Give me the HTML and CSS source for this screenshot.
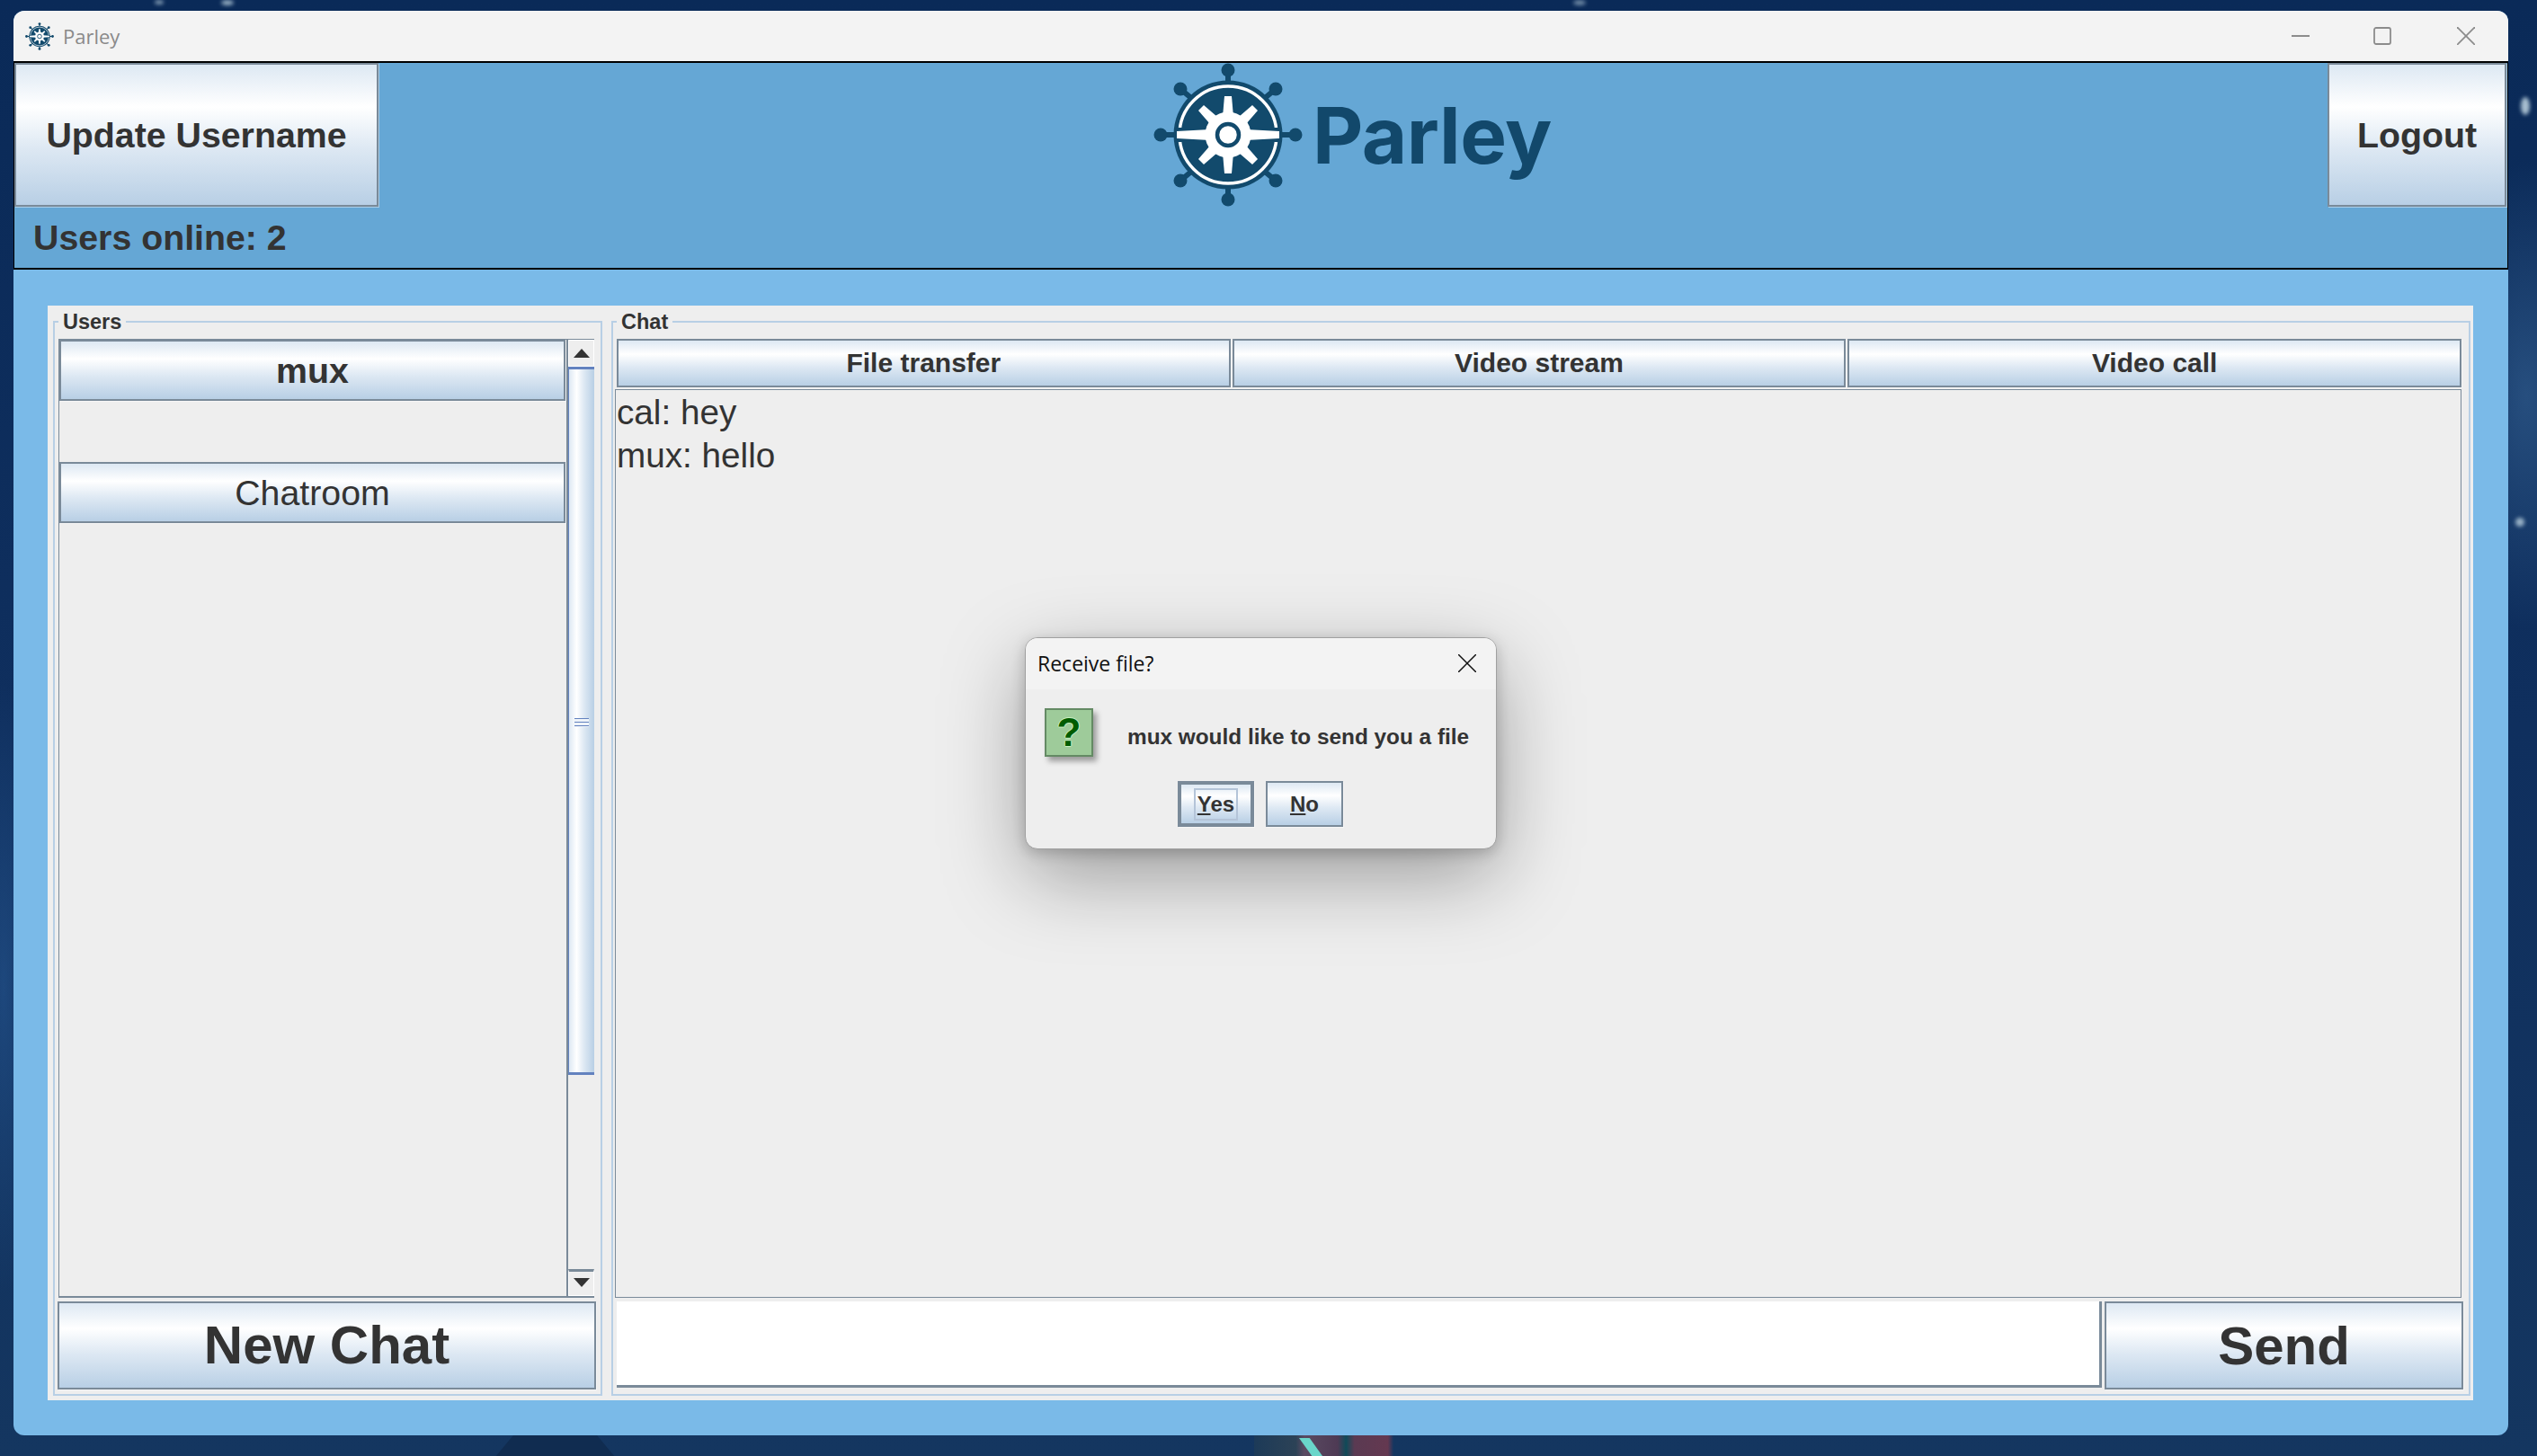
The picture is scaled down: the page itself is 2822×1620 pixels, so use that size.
FILE: index.html
```html
<!DOCTYPE html>
<html lang="en">
<head>
<meta charset="utf-8">
<title>Parley</title>
<link rel="stylesheet" href="styles.css">
</head>
<body>
<svg class="defs" width="0" height="0" aria-hidden="true">
  <defs>
    <symbol id="wheel" viewBox="-83 -80 166 160">
      <g stroke="#124a6c" stroke-width="6" stroke-linecap="round">
        <line x1="0" y1="-58" x2="0" y2="-72"/>
        <line x1="0" y1="58" x2="0" y2="72"/>
        <line x1="-58" y1="0" x2="-75" y2="0"/>
        <line x1="58" y1="0" x2="75" y2="0"/>
        <line x1="-41" y1="-41" x2="-53" y2="-51"/>
        <line x1="41" y1="-41" x2="53" y2="-51"/>
        <line x1="-41" y1="41" x2="-53" y2="51"/>
        <line x1="41" y1="41" x2="53" y2="51"/>
      </g>
      <g fill="#124a6c">
        <circle cx="0" cy="-72" r="7.5"/><circle cx="0" cy="72" r="7.5"/>
        <circle cx="-75" cy="0" r="7.5"/><circle cx="75" cy="0" r="7.5"/>
        <circle cx="-53" cy="-51" r="7.5"/><circle cx="53" cy="-51" r="7.5"/>
        <circle cx="-53" cy="51" r="7.5"/><circle cx="53" cy="51" r="7.5"/>
        <circle cx="0" cy="0" r="60.5"/>
      </g>
      <circle cx="0" cy="0" r="54" fill="none" stroke="#fff" stroke-width="3.5"/>
      <rect x="-60" y="-8" width="120" height="16" fill="#124a6c"/>
      <g fill="#fff">
        <polygon points="-57,-4 -20,-6 -20,6 -57,4"/>
        <polygon points="57,-4 20,-6 20,6 57,4"/>
        <polygon points="-4,-43 4,-43 6,-20 -6,-20"/>
        <polygon points="-4,43 4,43 6,20 -6,20"/>
        <polygon points="-33,-27 -27,-33 -12,-20 -20,-12"/>
        <polygon points="33,-27 27,-33 12,-20 20,-12"/>
        <polygon points="-33,27 -27,33 -12,20 -20,12"/>
        <polygon points="33,27 27,33 12,20 20,12"/>
        <circle cx="0" cy="0" r="25.5"/>
      </g>
      <circle cx="0" cy="0" r="12" fill="#fff" stroke="#124a6c" stroke-width="4.5"/>
    </symbol>
  </defs>
</svg>

<div class="desktop">
  <span class="star star-a"></span>
  <span class="star star-b"></span>
  <span class="star star-c"></span>
  <span class="star star-d"></span>
  <span class="star star-e"></span>
  <span class="peak"></span>
  <span class="mauve"></span>
  <span class="teal"></span>

  <main class="window">
    <div class="titlebar">
      <svg class="title-icon"><use href="#wheel"/></svg>
      <span class="title-text">Parley</span>
      <div class="controls">
        <svg class="ctl" viewBox="0 0 20 20"><line x1="0" y1="10" x2="20" y2="10"/></svg>
        <svg class="ctl" viewBox="0 0 20 20"><rect x="1" y="1" width="18" height="18" rx="2"/></svg>
        <svg class="ctl" viewBox="0 0 20 20"><line x1="0" y1="0" x2="20" y2="20"/><line x1="20" y1="0" x2="0" y2="20"/></svg>
      </div>
    </div>

    <header class="header">
      <div class="header-row">
        <button class="btn btn-update">Update Username</button>
        <div class="logo">
          <svg class="logo-wheel"><use href="#wheel"/></svg>
          <span class="logo-text">Parley</span>
        </div>
        <button class="btn btn-logout">Logout</button>
      </div>
      <div class="online">Users online: 2</div>
    </header>

    <div class="content">
      <div class="panel">
        <fieldset class="group group-users">
          <legend>Users</legend>
          <div class="list-wrap">
            <div class="list">
              <button class="btn list-item list-item-bold">mux</button>
              <button class="btn list-item">Chatroom</button>
            </div>
            <div class="scrollbar">
              <div class="arrow arrow-up"></div>
              <div class="thumb"><span class="grip"></span></div>
              <div class="track"></div>
              <div class="arrow arrow-down"></div>
            </div>
          </div>
          <button class="btn big new-chat">New Chat</button>
        </fieldset>

        <fieldset class="group group-chat">
          <legend>Chat</legend>
          <div class="tabs">
            <button class="btn tab">File transfer</button>
            <button class="btn tab">Video stream</button>
            <button class="btn tab">Video call</button>
          </div>
          <div class="messages">
            <div>cal: hey</div>
            <div>mux: hello</div>
          </div>
          <div class="composer">
            <div class="input"></div>
            <button class="btn big send">Send</button>
          </div>
        </fieldset>
      </div>
    </div>

    <div class="dialog">
      <div class="dialog-title">
        <span>Receive file?</span>
        <svg class="dialog-close" viewBox="0 0 20 20"><line x1="0" y1="0" x2="20" y2="20"/><line x1="20" y1="0" x2="0" y2="20"/></svg>
      </div>
      <div class="dialog-body">
        <div class="dialog-msg">
          <div class="q-icon">?</div>
          <div class="msg-text">mux would like to send you a file</div>
        </div>
        <div class="dialog-actions">
          <button class="btn dlg-btn dlg-default"><span class="focus"><u>Y</u>es</span></button>
          <button class="btn dlg-btn"><span><u>N</u>o</span></button>
        </div>
      </div>
    </div>
  </main>
</div>
</body>
</html>
```

FILE: styles.css
```css
* { box-sizing: border-box; }
html, body { margin: 0; padding: 0; }
body { font-family: "Liberation Sans", Arial, sans-serif; color: #333; overflow: hidden; }
.defs { position: absolute; }

.desktop {
  position: relative;
  width: 2822px;
  height: 1620px;
  padding: 12px 32px 23px 15px;
  overflow: hidden;
  background:
    radial-gradient(ellipse 90px 260px at 2810px 440px, rgba(70,120,170,.45), transparent),
    radial-gradient(ellipse 40px 340px at 4px 1100px, rgba(40,90,150,.55), transparent),
    linear-gradient(180deg, #0a2a58 0%, #0f2f5e 50%, #143660 100%);
}
.star { position: absolute; border-radius: 50%; background: #cfe4ee; filter: blur(2px); }
.star-a { left: 172px; top: 0; width: 10px; height: 5px; opacity: .6; }
.star-b { left: 246px; top: 0; width: 14px; height: 6px; opacity: .7; }
.star-c { left: 2804px; top: 108px; width: 10px; height: 20px; opacity: .8; }
.star-d { left: 2798px; top: 576px; width: 10px; height: 10px; opacity: .7; }
.star-e { left: 1750px; top: 0; width: 14px; height: 6px; opacity: .5; }
.peak { position: absolute; left: 551px; top: 1597px; width: 133px; height: 24px; background: #102c50; clip-path: polygon(15% 0, 85% 0, 100% 100%, 0 100%); }
.mauve { position: absolute; left: 1395px; top: 1597px; width: 155px; height: 24px; background: linear-gradient(90deg, #1c3a58 0%, #2c4256 30%, #5a4a62 36%, #4e3a54 60%, #0f4a58 66%, #5a3a52 72%, #643850 96%, #163660 100%); }
.teal { position: absolute; left: 1445px; top: 1600px; width: 26px; height: 20px; background: #6ad6ca; clip-path: polygon(0 0, 45% 0, 100% 100%, 55% 100%); }

.window {
  position: relative;
  display: flex;
  flex-direction: column;
  width: 2775px;
  height: 1585px;
  border-radius: 12px;
  overflow: hidden;
  background: #7abae8;
}

/* title bar */
.titlebar { display: flex; align-items: center; flex: none; height: 56px; padding-left: 13px; background: #f3f3f3; }
.title-icon { width: 32px; height: 31px; margin-right: 10px; }
.title-text { font-family: "Open Sans", sans-serif; font-size: 22px; color: #8a8a8a; }
.controls { display: flex; align-items: center; gap: 71px; margin-left: auto; margin-right: 37px; }
.ctl { width: 20px; height: 20px; fill: none; stroke: #8c8c8c; stroke-width: 1.8; }
.ctl:last-child { margin-left: 2px; }

/* header */
.header {
  flex: none;
  height: 232px;
  border: 2px solid #000;
  border-width: 2px 1px 2px 1px;
  background: #65a7d5;
}
.header-row { display: flex; align-items: flex-start; height: 160px; }
.btn {
  display: block;
  margin: 0;
  padding: 0;
  font-family: "Liberation Sans", Arial, sans-serif;
  font-weight: 700;
  color: #333;
  border: 2px solid #7a8a99;
  background: linear-gradient(180deg, #dde8f3 0%, #fff 30%, #dde8f3 60%, #b8cfe5 100%);
  box-shadow: 1px 1px 0 rgba(255,255,255,.45);
  text-align: center;
}
.btn-update { flex: none; width: 405px; height: 160px; font-size: 39.3px; }
.btn-logout { flex: none; width: 199px; height: 160px; font-size: 39.3px; margin-left: auto; margin-right: 1px; }
.logo { display: flex; align-items: flex-start; margin-left: 862px; }
.logo-wheel { flex: none; width: 166px; height: 160px; }
.logo-text {
  margin: 26px 0 0 11px;
  font-family: Inter, sans-serif;
  font-weight: 700;
  font-size: 87px;
  line-height: 110px;
  letter-spacing: -0.5px;
  color: #12486b;
}
.online { padding: 1px 0 0 21px; font-size: 39.3px; font-weight: 700; line-height: 66px; }

/* content */
.content { flex: 1; padding: 40px 39px 39px 38px; }
.panel {
  display: grid;
  grid-template-columns: 611px 1fr;
  height: 100%;
  padding: 5px 3px 5px 6px;
  gap: 10px;
  background: #eee;
}
.group {
  display: flex;
  flex-direction: column;
  min-width: 0;
  margin: 0;
  padding: 6px 6px 5px 4px;
  border: 2px solid #b8cfe5;
  border-radius: 0;
}
.group legend {
  padding: 0 5px;
  margin-left: 0;
  font-size: 23.5px;
  font-weight: 700;
  line-height: 26px;
  color: #333;
}

/* users */
.list-wrap { display: flex; flex: 1; min-height: 0; border: 1px solid #7a8a99; border-width: 1px 0 2px 1px; width: 596px; }
.list { flex: 1; display: flex; flex-direction: column; gap: 68px; }
.list-item { width: 563px; height: 68px; font-size: 39.3px; font-weight: 400; }
.list-item-bold { font-weight: 700; }
.scrollbar { flex: none; display: flex; flex-direction: column; width: 31px; border-left: 2px solid #7a8a99; }
.arrow { position: relative; flex: none; height: 30px; border: 1px solid #fff; }
.arrow::after { content: ""; position: absolute; left: 5px; width: 0; height: 0; border: 9px solid transparent; }
.arrow-up::after { top: 0; border-bottom: 10px solid #333; }
.arrow-down { border-top: 3px solid #7a8a99; height: 30px; }
.arrow-down::after { top: 7px; border-top: 10px solid #333; }
.thumb {
  position: relative;
  flex: none;
  height: 788px;
  border: 2px solid #6382bf;
  border-width: 3px 0 3px 1px;
  background: linear-gradient(90deg, #dde8f3 0%, #fff 30%, #dde8f3 60%, #b8cfe5 100%);
}
.grip { position: absolute; left: 6px; top: 388px; width: 16px; height: 10px; background: repeating-linear-gradient(180deg, #6382bf 0, #6382bf 1px, #eef3f9 1px, #eef3f9 4px); }
.track { flex: 1; }
.big { font-size: 60px; height: 98px; }
.new-chat { width: 599px; margin: 4px 0 0 -1px; padding-bottom: 2px; }

/* chat */
.tabs { display: grid; grid-template-columns: repeat(3, 1fr); gap: 2px; flex: none; margin-right: 2px; }
.tab { height: 54px; font-size: 30px; }
.messages {
  flex: 1;
  margin: 2px 2px 4px -2px;
  padding: 1px 0 0 1px;
  border: 1px solid #7a8a99;
  font-size: 38.7px;
  line-height: 48px;
  color: #333;
}
.composer { display: flex; gap: 3px; flex: none; }
.input { flex: 1; height: 96px; background: #fff; border: 2px solid #7a8a99; border-width: 0 3px 3px 0; }
.send { flex: none; width: 399px; }

/* dialog */
.dialog {
  position: absolute;
  left: 1125px;
  top: 697px;
  width: 525px;
  height: 236px;
  border: 1px solid #a0a0a0;
  border-radius: 14px;
  background: #eee;
  box-shadow: 0 30px 90px rgba(0,0,0,.35), 0 4px 16px rgba(0,0,0,.2);
}
.dialog-title {
  display: flex;
  align-items: center;
  height: 57px;
  padding: 0 22px 2px 13px;
  justify-content: space-between;
  background: #f3f3f3;
  border-radius: 13px 13px 0 0;
  font-family: "Open Sans", sans-serif;
  font-size: 23px;
  color: #111;
}
.dialog-close { width: 20px; height: 20px; fill: none; stroke: #111; stroke-width: 1.5; }
.dialog-body { padding: 21px 0 0 21px; }
.dialog-msg { display: flex; align-items: flex-start; height: 81px; }
.q-icon {
  flex: none;
  width: 54px;
  height: 54px;
  margin-right: 38px;
  border: 2px solid #648a64;
  background: #9ecb9a;
  box-shadow: 4px 5px 6px rgba(0,0,0,.35);
  font-size: 44px;
  font-weight: 700;
  line-height: 50px;
  text-align: center;
  color: #005c00;
  text-shadow: 1px 0 0 #c8f0c0, -1px 0 0 #c8f0c0, 0 1px 0 #c8f0c0, 0 -1px 0 #c8f0c0;
}
.msg-text { padding-top: 17px; font-size: 24.35px; font-weight: 700; line-height: 30px; white-space: nowrap; }
.dialog-actions { display: flex; gap: 13px; padding-left: 148px; }
.dlg-btn { width: 86px; height: 51px; font-size: 24px; }
.dlg-btn:first-child { width: 85px; }
.dlg-default { border-width: 4px; }
.focus { display: inline-block; border: 2px solid #b4c4d8; padding: 0 2px; line-height: 32px; }
```
